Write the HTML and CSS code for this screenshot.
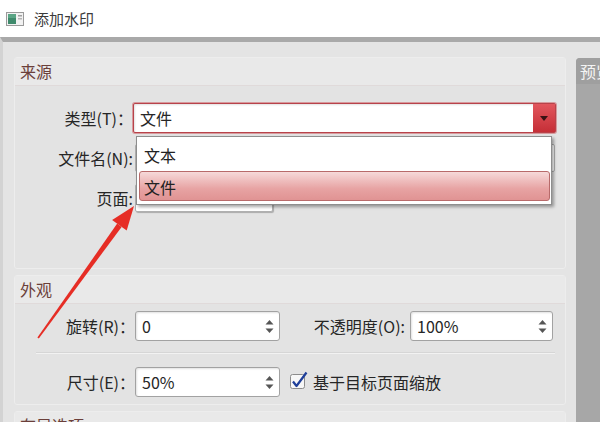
FILE: index.html
```html
<!DOCTYPE html>
<html lang="zh-CN">
<head>
    <meta charset="UTF-8">
    <title>添加水印</title>
    <link rel="stylesheet" href="styles.css">
</head>
<body>
    <div class="titlebar">
        <svg class="app-icon" width="18" height="14" viewBox="0 0 18 14">
            <rect x="0.5" y="0.5" width="17" height="13" fill="#f2f2f2" stroke="#9a9a9a"/>
            <rect x="2" y="2" width="8" height="10" fill="#3f8a6c"/>
            <rect x="2" y="2" width="8" height="4" fill="#5aa585"/>
            <rect x="12" y="3" width="4" height="1.5" fill="#a0a0a0"/>
            <rect x="12" y="6" width="4" height="1.5" fill="#b5b5b5"/>
        </svg>
        <span class="title">添加水印</span>
    </div>

    <div class="frame">
        <div class="main">
            <!-- 来源 -->
            <div class="group group-source">
                <div class="group-head">来源</div>
                <div class="group-body">
                    <div class="row">
                        <span class="label">类型(T)：</span>
                        <div class="combo">
                            <span class="combo-value">文件</span>
                            <span class="combo-btn"><i class="caret"></i></span>
                            <div class="dropdown">
                                <div class="option">文本</div>
                                <div class="option selected">文件</div>
                            </div>
                        </div>
                    </div>
                    <div class="row">
                        <span class="label">文件名(N):</span>
                        <div class="field field-long"></div>
                    </div>
                    <div class="row">
                        <span class="label">页面:</span>
                        <div class="field field-page"></div>
                    </div>
                </div>
            </div>

            <!-- 外观 -->
            <div class="group group-look">
                <div class="group-head">外观</div>
                <div class="group-body look-body">
                    <div class="row">
                        <span class="label">旋转(R)：</span>
                        <div class="spin">
                            <span class="spin-value">0</span>
                            <svg class="spin-arrows" width="9" height="15" viewBox="0 0 9 15">
                                <path d="M0.5 5.5 L4.5 1 L8.5 5.5 Z" fill="#555"/>
                                <path d="M0.5 9.5 L4.5 14 L8.5 9.5 Z" fill="#555"/>
                            </svg>
                        </div>
                        <span class="label label-opacity">不透明度(O):</span>
                        <div class="spin spin-opacity">
                            <span class="spin-value">100%</span>
                            <svg class="spin-arrows" width="9" height="15" viewBox="0 0 9 15">
                                <path d="M0.5 5.5 L4.5 1 L8.5 5.5 Z" fill="#555"/>
                                <path d="M0.5 9.5 L4.5 14 L8.5 9.5 Z" fill="#555"/>
                            </svg>
                        </div>
                    </div>
                    <div class="separator"></div>
                    <div class="row">
                        <span class="label">尺寸(E)：</span>
                        <div class="spin">
                            <span class="spin-value">50%</span>
                            <svg class="spin-arrows" width="9" height="15" viewBox="0 0 9 15">
                                <path d="M0.5 5.5 L4.5 1 L8.5 5.5 Z" fill="#555"/>
                                <path d="M0.5 9.5 L4.5 14 L8.5 9.5 Z" fill="#555"/>
                            </svg>
                        </div>
                        <label class="check">
                            <svg class="check-box" width="18" height="19" viewBox="0 0 18 19">
                                <rect x="0.5" y="3.5" width="14" height="14" rx="2" fill="#f7f7f7" stroke="#8c8c8c"/>
                                <path d="M3 10.5 L6.5 15 L16.5 1.5" fill="none" stroke="#1f3f9a" stroke-width="2.2" stroke-linejoin="round"/>
                            </svg>
                            <span>基于目标页面缩放</span>
                        </label>
                    </div>
                </div>
            </div>

            <!-- 布局选项 -->
            <div class="group group-layout">
                <div class="group-head">布局选项</div>
            </div>
        </div>

        <div class="preview">
            <div class="preview-head">预览</div>
        </div>
    </div>

    <!-- annotation arrow -->
    <svg class="annotation" width="600" height="422" viewBox="0 0 600 422">
        <polygon points="37.4,337.6 38.8,338.5 121.6,227 117.2,223.6" fill="#e62d25"/>
        <polygon points="134,206 126.7,230.6 112.1,220" fill="#e62d25"/>
    </svg>
</body>
</html>
```

FILE: styles.css
```css
/* General */
body {
    margin: 0;
    width: 600px;
    height: 422px;
    overflow: hidden;
    position: relative;
    background: #fff;
    font-family: "Noto Sans CJK SC", "Noto Sans", sans-serif;
    font-size: 16px;
    color: #262626;
}

.titlebar {
    height: 37px;
    display: flex;
    align-items: center;
    gap: 10px;
    padding-left: 6px;
    background: #fff;
}

.title {
    font-size: 15px;
    color: #3a3a3a;
}

.frame {
    display: flex;
    gap: 10px;
    height: 385px;
    box-sizing: border-box;
    overflow: hidden;
    border-top: 5px solid #a9a9a9;
    border-left: 3px solid #d3d3d3;
    background: #e4e4e4;
    padding: 15px 0 0 11px;
}

.main {
    width: 552px;
    flex: none;
    display: flex;
    flex-direction: column;
    gap: 6px;
}

/* Group boxes */
.group {
    background: #e3e3e3;
    border: 1px solid #ededed;
    border-radius: 3px;
    box-sizing: border-box;
    flex: none;
}

.group-source {
    height: 212px;
}

.group-look {
    height: 130px;
}

.group-layout {
    height: 40px;
}

.group-head {
    height: 27px;
    line-height: 27px;
    padding-left: 5px;
    background: #e9e9e9;
    border-bottom: 1px solid #e0dada;
    color: #6b3f3a;
    font-size: 16px;
}

.group-body {
    display: flex;
    flex-direction: column;
    gap: 10px;
    padding-top: 17px;
}

.look-body {
    gap: 0;
    padding-top: 7px;
}

.row {
    display: flex;
    align-items: center;
    height: 30px;
}

.label {
    width: 118px;
    flex: none;
    text-align: right;
    white-space: nowrap;
}

.group-look .label {
    width: 120px;
}

/* Combo box */
.combo {
    position: relative;
    width: 423px;
    height: 30px;
    box-sizing: border-box;
    display: flex;
    align-items: stretch;
    background: #fff;
    border: 1px solid #b8434a;
    border-radius: 2px;
    box-shadow: 0 0 0 1px rgba(205, 95, 100, 0.55), inset 1px 1px 2px rgba(0, 0, 0, 0.12);
}

.combo-value {
    flex: 1;
    padding-left: 6px;
    line-height: 28px;
}

.combo-btn {
    width: 22px;
    display: flex;
    align-items: center;
    justify-content: center;
    background: linear-gradient(#e2565d, #c52f37);
}

.caret {
    width: 0;
    height: 0;
    border-left: 4px solid transparent;
    border-right: 4px solid transparent;
    border-top: 5px solid #3a1214;
}

.dropdown {
    position: absolute;
    top: 32px;
    left: 2px;
    width: 416px;
    height: 69px;
    box-sizing: border-box;
    padding: 2px 1px 0 2px;
    background: #fff;
    border: 1px solid #8e8e8e;
    box-shadow: 2px 2px 3px rgba(0, 0, 0, 0.35);
    display: flex;
    flex-direction: column;
    gap: 2px;
    z-index: 2;
}

.option {
    height: 30px;
    line-height: 30px;
    padding-left: 4px;
    color: #222;
    border: 1px solid transparent;
    box-sizing: border-box;
}

.option.selected {
    border-color: #b86a6a;
    border-radius: 3px;
    background: linear-gradient(#f6d9d9, #e7a3a3 60%, #e09393);
}

/* Plain fields and spin boxes */
.field {
    height: 28px;
    box-sizing: border-box;
    background: #fff;
    border: 1px solid #b0b0b0;
    border-radius: 2px;
    margin-left: 2px;
}

.field-long {
    width: 420px;
}

.field-page {
    width: 138px;
    box-shadow: 1px 1px 1px rgba(0, 0, 0, 0.25);
}

.spin {
    width: 145px;
    height: 30px;
    box-sizing: border-box;
    flex: none;
    display: flex;
    align-items: center;
    padding: 0 5px 0 6px;
    background: #fff;
    border: 1px solid #a2a2a2;
    border-radius: 3px;
    box-shadow: inset 1px 1px 2px rgba(0, 0, 0, 0.12);
}

.spin-value {
    flex: 1;
}

.spin-opacity {
    width: 143px;
    margin-left: 5px;
}

.group-look .label-opacity {
    width: 125px;
}

.separator {
    height: 0;
    margin: 11px 10px 13px 21px;
    border-top: 1px solid #d6d6d6;
    border-bottom: 1px solid #f2f2f2;
}

.check {
    display: flex;
    align-items: center;
    gap: 5px;
    margin-left: 10px;
    margin-top: -3px;
}

.check span {
    margin-top: 3px;
}

/* Preview panel */
.preview {
    flex: 1;
    margin-top: 1px;
    background: #a7a7a7;
    border-radius: 4px 0 0 0;
    overflow: hidden;
}

.preview-head {
    height: 26px;
    line-height: 26px;
    padding-left: 4px;
    background: #9f9f9f;
    color: #f4f4f4;
    white-space: nowrap;
}

.annotation {
    position: absolute;
    left: 0;
    top: 0;
    pointer-events: none;
}
```
